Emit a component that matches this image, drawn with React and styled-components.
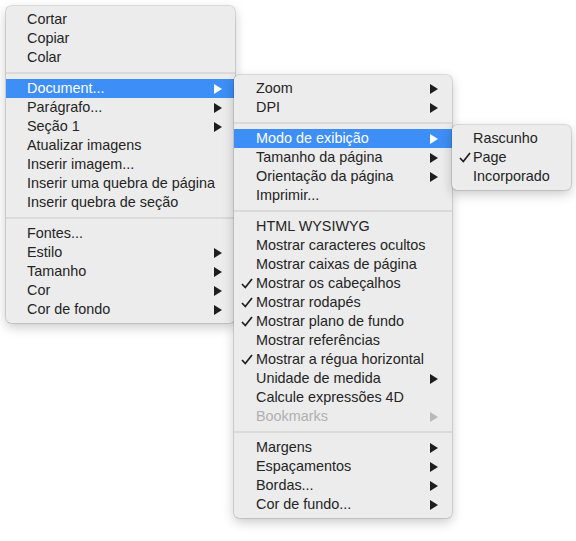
import React from "react";
import styled, { createGlobalStyle } from "styled-components";

const GlobalStyle = createGlobalStyle`
  html, body { margin: 0; padding: 0; background: #ffffff; }
  body {
    font-family: "Liberation Sans", Arial, sans-serif;
    -webkit-font-smoothing: antialiased;
  }
`;

const Canvas = styled.div`
  width: 576px;
  height: 541px;
  padding: 6px 0 0 6px;
  box-sizing: border-box;
  position: relative;
  overflow: hidden;
`;

const Menu = styled.div`
  width: ${(p) => p.$width}px;
  box-sizing: border-box;
  padding: 4px 0;
  background: #ececec;
  border-radius: 5px;
  box-shadow: 0 0 0 0.5px rgba(0, 0, 0, 0.22), 0 4px 12px rgba(0, 0, 0, 0.22);
`;

const Submenu = styled(Menu)`
  position: absolute;
  left: calc(100% - ${(p) => p.$overlap}px);
  top: -4px;
  z-index: 2;
`;

const Item = styled.div`
  position: relative;
  height: 19px;
  display: grid;
  grid-template-columns: ${(p) => p.$indent}px 1fr auto;
  align-items: center;
  padding-right: ${(p) => p.$arrowGap}px;
  font-size: 14.4px;
  line-height: 19px;
  color: ${(p) => (p.$active ? "#ffffff" : p.$disabled ? "#b0b0b0" : "#242424")};
  background: ${(p) => (p.$active ? "#3d8ef6" : "transparent")};
  white-space: nowrap;
`;

const CheckCell = styled.span`
  display: flex;
  align-items: center;
  padding-left: 7px;
`;

const Label = styled.span``;

const Separator = styled.div`
  height: 2px;
  margin: 5px 0;
  background: #dadada;
`;

const Arrow = ({ color }) => (
  <svg width="8" height="10" viewBox="0 0 8 10">
    <path d="M0 0 L8 5 L0 10 Z" fill={color} />
  </svg>
);

const Check = () => (
  <svg width="12" height="11" viewBox="0 0 12 11">
    <path d="M1 6 L4.3 9.5 L11 1" fill="none" stroke="#1e1e1e" strokeWidth="1.7" />
  </svg>
);

function Row({ label, sub, checked, active, disabled, indent = 21, arrowGap = 13, children }) {
  const arrowColor = active ? "#ffffff" : disabled ? "#b8b8b8" : "#1e1e1e";
  return (
    <Item $active={active} $disabled={disabled} $indent={indent} $arrowGap={arrowGap}>
      <CheckCell>{checked ? <Check /> : null}</CheckCell>
      <Label>{label}</Label>
      {sub ? <Arrow color={arrowColor} /> : <span />}
      {children}
    </Item>
  );
}

export default function App() {
  return (
    <>
      <GlobalStyle />
      <Canvas>
        <Menu $width={229}>
          <Row label="Cortar" />
          <Row label="Copiar" />
          <Row label="Colar" />
          <Separator />
          <Row label="Document..." sub active>
            <Submenu $width={218} $overlap={1}>
              <Row label="Zoom" sub indent={22} arrowGap={14} />
              <Row label="DPI" sub indent={22} arrowGap={14} />
              <Separator />
              <Row label="Modo de exibição" sub active indent={22} arrowGap={14}>
                <Submenu $width={119} $overlap={0}>
                  <Row label="Rascunho" />
                  <Row label="Page" checked />
                  <Row label="Incorporado" />
                </Submenu>
              </Row>
              <Row label="Tamanho da página" sub indent={22} arrowGap={14} />
              <Row label="Orientação da página" sub indent={22} arrowGap={14} />
              <Row label="Imprimir..." indent={22} arrowGap={14} />
              <Separator />
              <Row label="HTML WYSIWYG" indent={22} arrowGap={14} />
              <Row label="Mostrar caracteres ocultos" indent={22} arrowGap={14} />
              <Row label="Mostrar caixas de página" indent={22} arrowGap={14} />
              <Row label="Mostrar os cabeçalhos" checked indent={22} arrowGap={14} />
              <Row label="Mostrar rodapés" checked indent={22} arrowGap={14} />
              <Row label="Mostrar plano de fundo" checked indent={22} arrowGap={14} />
              <Row label="Mostrar referências" indent={22} arrowGap={14} />
              <Row label="Mostrar a régua horizontal" checked indent={22} arrowGap={14} />
              <Row label="Unidade de medida" sub indent={22} arrowGap={14} />
              <Row label="Calcule expressões 4D" indent={22} arrowGap={14} />
              <Row label="Bookmarks" sub disabled indent={22} arrowGap={14} />
              <Separator />
              <Row label="Margens" sub indent={22} arrowGap={14} />
              <Row label="Espaçamentos" sub indent={22} arrowGap={14} />
              <Row label="Bordas..." sub indent={22} arrowGap={14} />
              <Row label="Cor de fundo..." sub indent={22} arrowGap={14} />
            </Submenu>
          </Row>
          <Row label="Parágrafo..." sub />
          <Row label="Seção 1" sub />
          <Row label="Atualizar imagens" />
          <Row label="Inserir imagem..." />
          <Row label="Inserir uma quebra de página" />
          <Row label="Inserir quebra de seção" />
          <Separator />
          <Row label="Fontes..." />
          <Row label="Estilo" sub />
          <Row label="Tamanho" sub />
          <Row label="Cor" sub />
          <Row label="Cor de fondo" sub />
        </Menu>
      </Canvas>
    </>
  );
}
